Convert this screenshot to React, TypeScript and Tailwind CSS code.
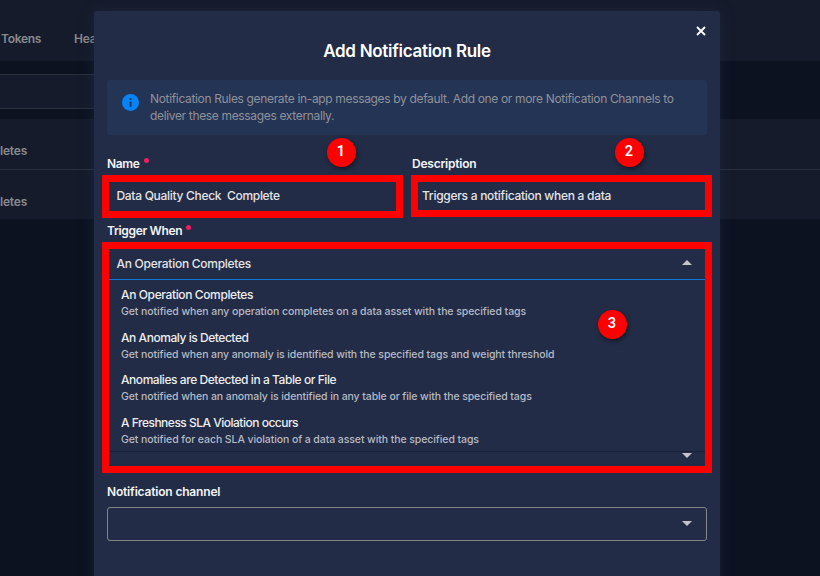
import React from "react";

const triggers = [
  {
    title: "An Operation Completes",
    text: "Get notified when any operation completes on a data asset with the specified tags",
    titleClass: "tracking-[-0.38px]",
    textClass: "tracking-[-0.075px]",
  },
  {
    title: "An Anomaly is Detected",
    text: "Get notified when any anomaly is identified with the specified tags and weight threshold",
    titleClass: "tracking-[-0.45px]",
    textClass: "tracking-[-0.09px]",
  },
  {
    title: "Anomalies are Detected in a Table or File",
    text: "Get notified when an anomaly is identified in any table or file with the specified tags",
    titleClass: "tracking-[-0.44px]",
    textClass: "tracking-[-0.095px]",
  },
  {
    title: "A Freshness SLA Violation occurs",
    text: "Get notified for each SLA violation of a data asset with the specified tags",
    titleClass: "tracking-[-0.5px]",
    textClass: "tracking-[-0.085px]",
  },
];

function Caret({ up = false }: { up?: boolean }) {
  return (
    <svg width="10" height="5" viewBox="0 0 10 5" className="mb-0.5 shrink-0 fill-[#c3c5cc]">
      <path d={up ? "M0 5 5 0l5 5Z" : "M0 0h10L5 5Z"} />
    </svg>
  );
}

function Label({ children, required = false }: { children: React.ReactNode; required?: boolean }) {
  return (
    <div className="flex h-4 items-center gap-1 text-[12px] font-semibold leading-4 text-[#f3f4f6]">
      {children}
      {required && <span className="mb-[7px] size-[5px] rounded-full bg-[#ec1f5f]" />}
    </div>
  );
}

function Marker({ n, className }: { n: number; className: string }) {
  return (
    <div
      className={`absolute flex size-[29px] items-center justify-center rounded-full bg-[#ff0000] pr-px pb-px font-[Roboto,sans-serif] text-[14.5px] font-semibold text-white shadow-[1px_2px_4px_rgba(0,0,0,0.5)] ${className}`}
    >
      {n}
    </div>
  );
}

function Backdrop() {
  return (
    <div className="h-full bg-[#0c1220] text-[12px] font-semibold text-[#888a8f]">
      <div className="flex h-[61px] items-center gap-[33px] bg-[#151b2a] pt-4 pl-px">
        <span className="w-10 tracking-[-0.3px]">Tokens</span>
        <span className="tracking-[-0.2px]">Health</span>
      </div>
      <div className="mt-[13px] h-[35px] w-[300px] border-y border-[#2a303e] bg-[#151b2a]" />
      <div className="mt-2.5 flex h-[51px] items-center border-b border-[#2a303e] bg-[#151b2a] pt-[14px]">
        <span className="tracking-[-0.2px]">letes</span>
      </div>
      <div className="flex h-[49px] items-center bg-[#151b2a] pt-[15px]">
        <span className="tracking-[-0.2px]">letes</span>
      </div>
    </div>
  );
}

export default function App() {
  return (
    <div className="relative h-[576px] w-[820px] overflow-hidden font-[Inter,'Noto_Sans',sans-serif]">
      <Backdrop />
      <div className="absolute top-[11px] left-[94px] h-[600px] w-[626px] rounded-[3px] bg-[#222c46] px-[13px] shadow-[0_0_14px_rgba(34,50,85,0.45)]">
        <div className="flex h-[30px] items-end justify-end pr-px pb-[5px]">
          <svg width="10" height="10" viewBox="0 0 10 10" className="stroke-white stroke-[1.8]">
            <path d="m1 1 8 8M9 1 1 9" />
          </svg>
        </div>
        <h1 className="flex h-[39px] justify-center text-[17px] leading-5 font-semibold tracking-[-0.3px] text-white">
          Add Notification Rule
        </h1>

        <div className="flex h-[55px] gap-[11px] rounded-[3px] bg-[#243455] pt-[10px] pl-[15px]">
          <svg width="17" height="17" viewBox="0 0 17 17" className="mt-1 shrink-0">
            <circle cx="8.5" cy="8.5" r="8.5" fill="#0583f8" />
            <path d="M7.6 4.3h1.9v1.8H7.6zM7.6 7.4h1.9v5.3H7.6z" fill="#243455" />
          </svg>
          <p className="text-[12px] leading-[17px] tracking-[-0.34px] whitespace-nowrap text-[#8f9299]">
            Notification Rules generate in-app messages by default. Add one or more Notification Channels to
            <br />
            deliver these messages externally.
          </p>
        </div>

        <div className="mt-[21px] flex gap-[9px] text-[12px]">
          <div className="w-[296px]">
            <Label required>
              <span className="tracking-[-0.35px]">Name</span>
            </Label>
            <div className="mt-[3px] -ml-[5px] flex h-[43px] w-[301px] items-center border-[7px] border-[#ff0000] pb-0.5 pl-[7.5px] font-medium whitespace-pre text-[#e4e5e9]">
              <span className="tracking-[-0.3px]">Data Quality Check  Complete</span>
            </div>
          </div>
          <div className="w-[295px]">
            <Label>
              <span className="tracking-[-0.22px]">Description</span>
            </Label>
            <div className="mt-[3px] -ml-px flex h-[42px] w-[301px] items-center border-[7px] border-[#ff0000] pl-1 font-medium whitespace-nowrap text-[#e4e5e9]">
              <span className="tracking-[-0.28px]">Triggers a notification when a data</span>
            </div>
          </div>
        </div>

        <div className="mt-[5px]">
          <Label required>
            <span className="tracking-[-0.33px]">Trigger When</span>
          </Label>
        </div>
        <div className="mt-[3px] -ml-[5px] h-[231px] w-[610px] border-[7px] border-[#ff0000] text-[12px] font-medium">
          <div className="flex h-[31px] items-center justify-between border-b border-[#0d78dc] pr-[13px] pb-px pl-[7.5px] text-[#e4e5e9]">
            <span className="tracking-[-0.27px]">An Operation Completes</span>
            <Caret up />
          </div>
          <div className="h-[172px] border-b border-[#17213a] pt-[7px] pl-3">
            {triggers.map((t) => (
              <div key={t.title} className="h-[42.7px] whitespace-nowrap">
                <div className="leading-4 text-[#eceef1]">
                  <span className={t.titleClass}>{t.title}</span>
                </div>
                <div className="text-[10.5px] leading-[17px] text-[#b6bac4]">
                  <span className={t.textClass}>{t.text}</span>
                </div>
              </div>
            ))}
          </div>
          <div className="flex justify-end pt-px pr-[13px]">
            <Caret />
          </div>
        </div>

        <div className="mt-[11px]">
          <Label>
            <span className="tracking-[-0.18px]">Notification channel</span>
          </Label>
        </div>
        <div className="mt-[7px] flex h-[34px] items-center justify-end rounded-[3px] border border-[#85868b] pr-[14px]">
          <Caret />
        </div>
      </div>
      <Marker n={1} className="top-[138px] left-[327px]" />
      <Marker n={2} className="top-[138px] left-[615px]" />
      <Marker n={3} className="top-[310px] left-[598px]" />
    </div>
  );
}
